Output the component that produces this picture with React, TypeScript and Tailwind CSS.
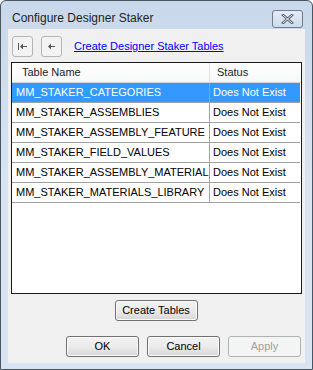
const rows = [
  'MM_STAKER_CATEGORIES',
  'MM_STAKER_ASSEMBLIES',
  'MM_STAKER_ASSEMBLY_FEATURE',
  'MM_STAKER_FIELD_VALUES',
  'MM_STAKER_ASSEMBLY_MATERIAL',
  'MM_STAKER_MATERIALS_LIBRARY',
];

const ui = { fontFamily: '"Liberation Sans", Arial, sans-serif' };

function WinButton({ label, className, disabled }: { label: string; className: string; disabled?: boolean }) {
  return (
    <div
      className={`flex items-center justify-center h-[21px] rounded-[3px] border text-[11px] ${
        disabled
          ? 'border-[#adb2b5] bg-[#f4f4f4] text-[#a0a0a0]'
          : 'border-[#707070] bg-gradient-to-b from-[#f2f2f2] via-[#ebebeb] to-[#d6d6d6] text-black shadow-[inset_0_0_0_1px_#fcfcfc]'
      } ${className}`}
    >
      {label}
    </div>
  );
}

function NavButton({ first }: { first?: boolean }) {
  return (
    <div className="w-[21px] h-[21px] rounded-[3px] border border-[#b5b5b5] bg-[#f3f3f3] flex items-center justify-center">
      <svg width="11" height="9" viewBox="0 0 11 9">
        {first && <rect x="1" y="1" width="1" height="7" fill="#555" />}
        <polygon points={first ? '3,4.5 6,1.5 6,7.5' : '2,4.5 5,1.5 5,7.5'} fill="#555" />
        <rect x={first ? 6 : 5} y="4" width="4" height="1" fill="#555" />
      </svg>
    </div>
  );
}

export default function App() {
  return (
    <div className="w-[313px] h-[370px] bg-white" style={ui}>
      <div className="w-[313px] h-[370px] border border-[#4a5562] rounded-t-[6px] bg-gradient-to-b from-[#c9d8ea] via-[#d7e4f2] to-[#d7e4f2] flex flex-col px-[7px] pb-[6px]">
        {/* title bar */}
        <div className="h-[28px] flex items-start justify-between shrink-0">
          <span className="pt-[10px] pl-[4px] text-[12px] leading-[14px] text-[#1e1e1e]">
            Configure Designer Staker
          </span>
          <div className="mt-[9px] mr-[2px] w-[31px] h-[18px] rounded-[3px] border border-[#6e7d8e] bg-gradient-to-b from-[#e4ecf6] to-[#cddbeb] flex items-center justify-center">
            <svg width="13" height="10" viewBox="0 0 13 10">
              <path d="M2 1 L11 9 M11 1 L2 9" stroke="#4d5a68" strokeWidth="2.6" strokeLinecap="square" />
              <path d="M2 1 L11 9 M11 1 L2 9" stroke="#f4f7fb" strokeWidth="1" strokeLinecap="square" />
            </svg>
          </div>
        </div>

        {/* client area */}
        <div className="flex-1 bg-[#f0f0f0] flex flex-col px-[3px]">
          <div className="flex items-center h-[33px] pt-[1px] pl-[1px]">
            <NavButton first />
            <div className="w-[8px]" />
            <NavButton />
            <span className="ml-[12px] text-[11px] text-[#0000ff] underline">Create Designer Staker Tables</span>
          </div>

          <div className="h-[232px] border border-[#1b1b1b] bg-white text-[11px] leading-[19px]">
            <div className="flex h-[20px] border-b border-[#d5d5d5] bg-gradient-to-b from-white to-[#f7f8f9]">
              <div className="w-[198px] pl-[10px] border-r border-[#e2e2e2] text-[#1a1a2a]">Table Name</div>
              <div className="pl-[7px] text-[#1a1a2a]">Status</div>
            </div>
            {rows.map((r, i) => (
              <div
                key={r}
                className={`flex h-[20px] border-b border-[#a0a0a0] mr-[1px] ${i === 0 ? 'bg-[#3399ff] text-white' : 'text-black'}`}
              >
                <div className="w-[198px] pl-[4px] border-r border-[#a0a0a0] whitespace-nowrap">{r}</div>
                <div className="pl-[3px] whitespace-nowrap">Does Not Exist</div>
              </div>
            ))}
          </div>

          <div className="flex justify-center mt-[6px] pr-[1px]">
            <WinButton label="Create Tables" className="w-[83px]" />
          </div>

          <div className="flex justify-end gap-[8px] mt-[15px] pr-[1px]">
            <WinButton label="OK" className="w-[73px]" />
            <WinButton label="Cancel" className="w-[73px]" />
            <WinButton label="Apply" className="w-[73px]" disabled />
          </div>
        </div>
      </div>
    </div>
  );
}
